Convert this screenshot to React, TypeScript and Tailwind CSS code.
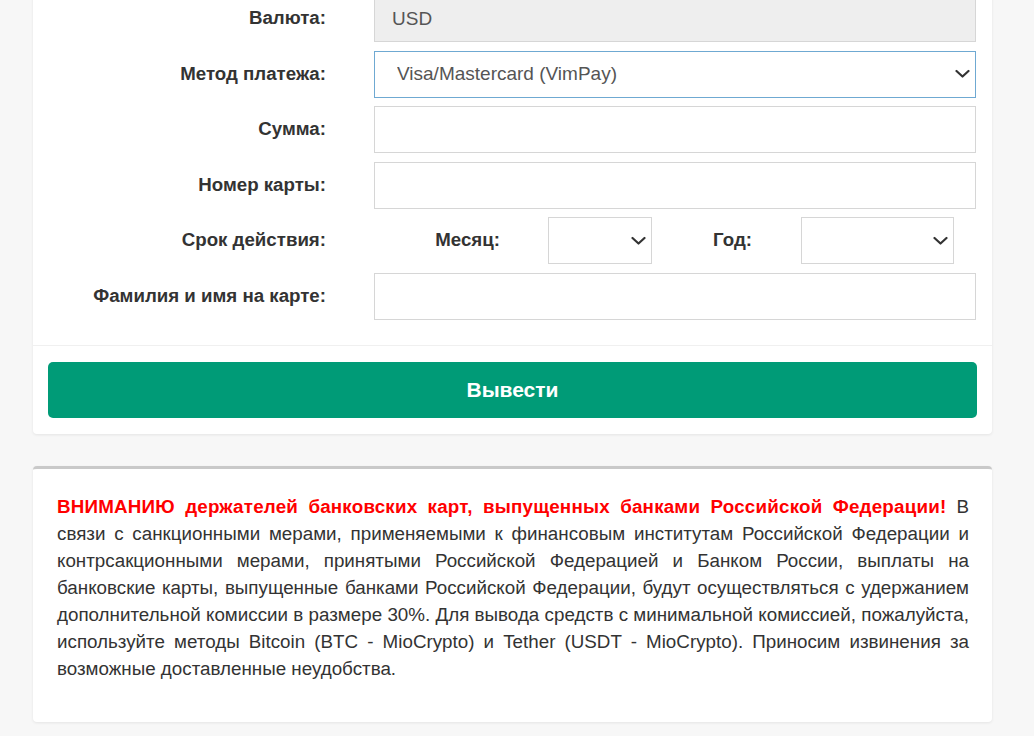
import React from 'react';

function Chevron() {
  return (
    <svg
      className="pointer-events-none absolute right-[6px] top-1/2 -translate-y-1/2"
      width="15"
      height="9"
      viewBox="0 0 15 9"
      fill="none"
    >
      <path d="M1.5 1.5L7.5 7L13.5 1.5" stroke="#333" strokeWidth="2.2" strokeLinecap="round" strokeLinejoin="round" />
    </svg>
  );
}

function Select({ value, className, focused }: { value?: string; className?: string; focused?: boolean }) {
  return (
    <div className={`relative ${className ?? ''}`}>
      <select
        defaultValue={value ?? ''}
        className={`h-full w-full appearance-none bg-white pl-[22px] text-[19px] text-[#555] outline-none ${
          focused ? 'border border-[#6fa9d2]' : 'border border-[#d6d6d6]'
        }`}
      >
        {value ? <option>{value}</option> : <option value=""></option>}
      </select>
      <Chevron />
    </div>
  );
}

function Row({ label, children }: { label: string; children: React.ReactNode }) {
  return (
    <div className="flex items-center gap-[48px]">
      <label className="w-[278px] text-right text-[18.7px] font-bold text-[#333]">{label}</label>
      <div className="w-[602px]">{children}</div>
    </div>
  );
}

export default function App() {
  return (
    <div className="min-h-[736px] bg-[#f7f7f7] px-[33px] pb-4 font-['Liberation_Sans',Arial,sans-serif]">
      <div className="mt-[-20px] w-[959px] rounded-[4px] bg-white shadow-[0_1px_3px_rgba(0,0,0,0.08)]">
        <div className="flex flex-col gap-[8.5px] px-[15px] pb-[25px] pt-[15px]">
          <Row label="Валюта:">
            <input
              readOnly
              value="USD"
              className="h-[47px] w-full border border-[#d6d6d6] bg-[#eeeeee] pl-[17px] text-[19px] text-[#555] outline-none"
            />
          </Row>
          <Row label="Метод платежа:">
            <Select value="Visa/Mastercard (VimPay)" className="h-[47px] w-full" focused />
          </Row>
          <Row label="Сумма:">
            <input className="h-[47px] w-full border border-[#d6d6d6] bg-white px-[17px] text-[19px] outline-none" />
          </Row>
          <Row label="Номер карты:">
            <input className="h-[47px] w-full border border-[#d6d6d6] bg-white px-[17px] text-[19px] outline-none" />
          </Row>
          <Row label="Срок действия:">
            <div className="flex items-center">
              <span className="w-[126px] text-right text-[18.7px] font-bold text-[#333]">Месяц:</span>
              <Select className="ml-[48px] h-[47px] w-[104px]" />
              <span className="w-[100px] text-right text-[18.7px] font-bold text-[#333]">Год:</span>
              <Select className="ml-[49px] h-[47px] w-[153px]" />
            </div>
          </Row>
          <Row label="Фамилия и имя на карте:">
            <input className="h-[47px] w-full border border-[#d6d6d6] bg-white px-[17px] text-[19px] outline-none" />
          </Row>
        </div>
        <div className="border-t border-[#f0f0f0] px-[15px] pb-[16px] pt-[16px]">
          <button className="h-[56px] w-full rounded-[5px] bg-[#009b77] text-[21px] font-bold text-white">
            Вывести
          </button>
        </div>
      </div>

      <div className="mt-[32px] w-[959px] rounded-[4px] border-t-[3px] border-[#c9c9c9] bg-white pb-[24px] pl-[24px] pr-[23px] pt-[24px] shadow-[0_1px_3px_rgba(0,0,0,0.08)]">
        <p className="mb-[16px] text-justify text-[18.8px] leading-[27px] text-[#333]">
          <span className="font-bold tracking-[0.2px] text-[#ff0000]">
            ВНИМАНИЮ держателей банковских карт, выпущенных банками Российской Федерации!
          </span>{' '}
          В связи с санкционными мерами, применяемыми к финансовым институтам Российской Федерации и
          контрсакционными мерами, принятыми Российской Федерацией и Банком России, выплаты на банковские
          карты, выпущенные банками Российской Федерации, будут осуществляться с удержанием дополнительной
          комиссии в размере 30%. Для вывода средств с минимальной комиссией, пожалуйста, используйте методы
          Bitcoin (BTC - MioCrypto) и Tether (USDT - MioCrypto). Приносим извинения за возможные доставленные
          неудобства.
        </p>
      </div>
    </div>
  );
}
